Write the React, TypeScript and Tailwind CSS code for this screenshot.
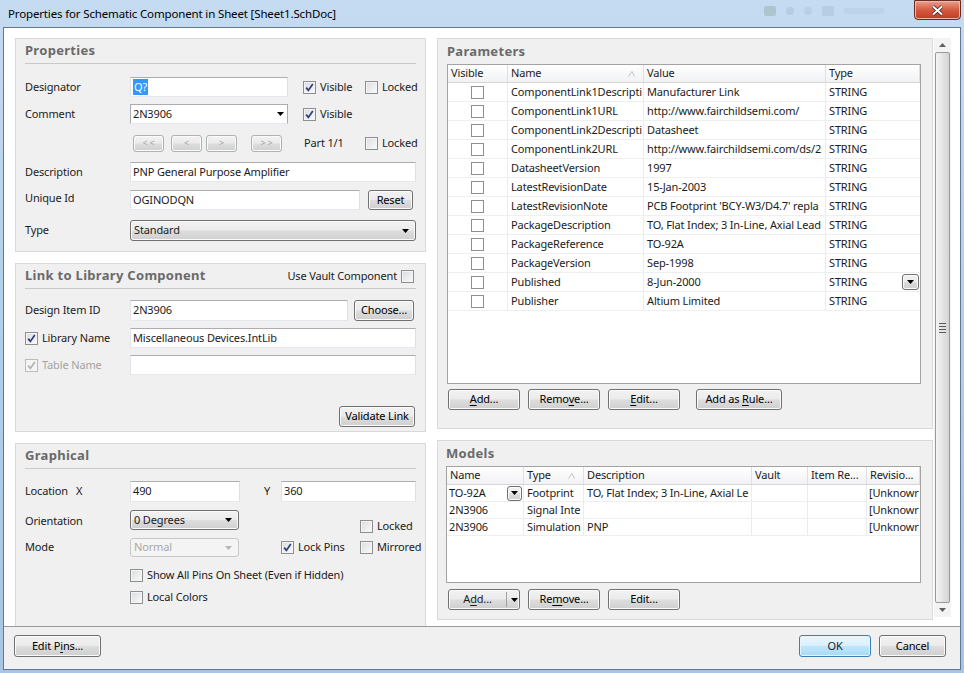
import React from "react";

const btnBg =
  "bg-[linear-gradient(#f2f2f2_0%,#ebebeb_48%,#dddddd_52%,#cfcfcf_100%)] border border-[#707070] rounded-[3px] shadow-[inset_0_0_0_1px_#fbfbfb]";

function Check({ checked, disabled }: { checked?: boolean; disabled?: boolean }) {
  return (
    <span
      className={`inline-flex w-[13px] h-[13px] shrink-0 items-center justify-center border ${
        disabled
          ? "border-[#bcbcbc] bg-[#f4f4f4]"
          : "border-[#8e8f8f] bg-[linear-gradient(135deg,#d9dbde,#fbfbfb)] shadow-[inset_0_0_0_1px_#f4f4f4]"
      }`}
    >
      {checked && (
        <svg width="9" height="9" viewBox="0 0 9 9">
          <path
            d="M1.2 4.6 L3.4 7.4 L7.8 1"
            fill="none"
            stroke={disabled ? "#b0b0b0" : "#2b3d78"}
            strokeWidth="1.7"
          />
        </svg>
      )}
    </span>
  );
}

function CheckLabel({
  label,
  checked,
  disabled,
  className = "",
}: {
  label: string;
  checked?: boolean;
  disabled?: boolean;
  className?: string;
}) {
  return (
    <span className={`flex items-center gap-[4px] shrink-0 whitespace-nowrap ${className}`}>
      <Check checked={checked} disabled={disabled} />
      <span className={disabled ? "text-[#a3a3a3]" : ""}>{label}</span>
    </span>
  );
}

function Btn({
  children,
  className = "",
  disabled,
}: {
  children: React.ReactNode;
  className?: string;
  disabled?: boolean;
}) {
  return (
    <button
      className={`flex items-center justify-center shrink-0 ${btnBg} ${
        disabled ? "text-[#a0a0a0] border-[#adb2b5]" : "text-black"
      } ${className}`}
    >
      <span className="whitespace-pre">{children}</span>
    </button>
  );
}

function Arrow({ color = "#000" }: { color?: string }) {
  return (
    <svg width="7" height="4" viewBox="0 0 7 4">
      <path d="M0 0 H7 L3.5 4 Z" fill={color} />
    </svg>
  );
}

function TextBox({ value, className = "" }: { value?: React.ReactNode; className?: string }) {
  return (
    <div
      className={`flex items-center shrink-0 bg-white border border-[#abadb3] border-l-[#e2e3ea] border-r-[#dbdfe6] border-b-[#e3e9ef] px-[2px] whitespace-nowrap overflow-hidden ${className}`}
    >
      {value}
    </div>
  );
}

function GraySelect({
  value,
  className = "",
  disabled,
}: {
  value: string;
  className?: string;
  disabled?: boolean;
}) {
  return (
    <div
      className={`flex items-center justify-between shrink-0 pl-[3px] pr-[6px] rounded-[3px] border ${
        disabled ? "border-[#c6c9cc] bg-[#f4f4f4] text-[#a8a8a8]" : `${btnBg}`
      } ${className}`}
    >
      <span>{value}</span>
      <Arrow color={disabled ? "#b5b5b5" : "#000"} />
    </div>
  );
}

function Panel({
  title,
  right,
  children,
  className = "",
}: {
  title: string;
  right?: React.ReactNode;
  children: React.ReactNode;
  className?: string;
}) {
  return (
    <div className={`bg-[#f0f0f0] border border-[#d9d9d9] px-[9px] ${className}`}>
      <div className="h-[25px] flex items-center justify-between border-b border-[#c9c9c9]">
        <span className="font-bold text-[13px] tracking-[0.3px] text-[#6a6a6a]">{title}</span>
        {right}
      </div>
      {children}
    </div>
  );
}

const params: [string, string][] = [
  ["ComponentLink1Descripti", "Manufacturer Link"],
  ["ComponentLink1URL", "http://www.fairchildsemi.com/"],
  ["ComponentLink2Descripti", "Datasheet"],
  ["ComponentLink2URL", "http://www.fairchildsemi.com/ds/2"],
  ["DatasheetVersion", "1997"],
  ["LatestRevisionDate", "15-Jan-2003"],
  ["LatestRevisionNote", "PCB Footprint 'BCY-W3/D4.7' repla"],
  ["PackageDescription", "TO, Flat Index; 3 In-Line, Axial Lead"],
  ["PackageReference", "TO-92A"],
  ["PackageVersion", "Sep-1998"],
  ["Published", "8-Jun-2000"],
  ["Publisher", "Altium Limited"],
];

const models = [
  ["TO-92A", "Footprint", "TO, Flat Index; 3 In-Line, Axial Le", "", "", "[Unknowr"],
  ["2N3906", "Signal Inte", "", "", "", "[Unknowr"],
  ["2N3906", "Simulation", "PNP", "", "", "[Unknowr"],
];

function SortMark() {
  return (
    <svg width="7" height="6" viewBox="0 0 7 6">
      <path d="M0.5 5.5 L4 0.5 L6.5 5.5" fill="none" stroke="#c2c2c2" strokeWidth="1" />
    </svg>
  );
}

function HeaderCell({ label, w, sort }: { label: string; w?: string; sort?: boolean }) {
  return (
    <div
      className={`flex items-center justify-between pl-[3px] pr-[8px] border-r border-[#dfe0e2] whitespace-nowrap overflow-hidden ${
        w ?? "flex-1"
      }`}
    >
      <span>{label}</span>
      {sort && <SortMark />}
    </div>
  );
}

function U({ children }: { children: React.ReactNode }) {
  return <span className="underline underline-offset-2">{children}</span>;
}

export default function App() {
  return (
    <div className="w-[964px] h-[673px] overflow-hidden bg-[linear-gradient(180deg,#c5dbf1_0%,#b7d0ea_40%,#a9c5e4_100%)] font-['Noto_Sans',sans-serif] text-[11px] tracking-[-0.15px] text-[#1b1b1b] flex flex-col">
      {/* title bar */}
      <div className="h-[27px] flex items-start justify-between shrink-0">
        <span className="pl-[8px] pt-[5px] text-[11.5px] text-black">
          Properties for Schematic Component in Sheet [Sheet1.SchDoc]
        </span>
        <div className="flex items-start">
          <div className="flex items-center gap-[10px] mt-[6px] mr-[30px] opacity-25">
            <span className="w-[12px] h-[10px] bg-[#6a8a6a] rounded-[2px]" />
            <span className="w-[8px] h-[8px] bg-[#8aa0c0] rounded-full" />
            <span className="w-[8px] h-[8px] bg-[#9ab0c8] rounded-full" />
            <span className="w-[12px] h-[10px] bg-[#8ea4bc] rounded-[2px]" />
            <span className="w-[40px] h-[6px] bg-[#a4bcd4] rounded-[2px]" />
          </div>
          <div className="w-[47px] h-[20px] mr-[3px] rounded-b-[4px] border border-[#6b2a20] bg-[linear-gradient(#e8a090_0%,#d45a40_50%,#c23a22_100%)] flex items-center justify-center shadow-[inset_0_0_0_1px_#f0b8a8]">
            <svg width="13" height="11" viewBox="0 0 13 11">
              <path d="M2 1.5 L11 9.5 M11 1.5 L2 9.5" stroke="#3a1a14" strokeWidth="3.4" />
              <path d="M2 1.5 L11 9.5 M11 1.5 L2 9.5" stroke="#fff" strokeWidth="2" />
            </svg>
          </div>
        </div>
      </div>

      {/* client */}
      <div className="ml-[3px] mr-[3px] h-[643px] border border-[#5e7896] bg-white flex flex-col shrink-0">
        <div className="h-[598px] flex pl-[11px] pt-[10px]">
          {/* left column */}
          <div className="w-[411px] flex flex-col">
            <Panel title="Properties" className="h-[214px]">
              <div className="mt-[13px] h-[20px] flex items-center">
                <span className="w-[105px] shrink-0">Designator</span>
                <TextBox
                  className="w-[158px] h-[20px]"
                  value={<span className="bg-[#3399ff] text-white px-[1px]">Q?</span>}
                />
                <CheckLabel label="Visible" checked className="ml-[15px] w-[62px]" />
                <CheckLabel label="Locked" />
              </div>
              <div className="mt-[7px] h-[20px] flex items-center">
                <span className="w-[105px] shrink-0">Comment</span>
                <div className="w-[158px] h-[20px] shrink-0 bg-white border border-[#abadb3] border-b-[#e3e9ef] flex items-center justify-between pl-[2px] pr-[3px]">
                  <span>2N3906</span>
                  <Arrow />
                </div>
                <CheckLabel label="Visible" checked className="ml-[15px]" />
              </div>
              <div className="mt-[10px] h-[18px] flex items-center">
                <div className="w-[108px] shrink-0" />
                <Btn disabled className="w-[31px] h-[17px] text-[9px]">&lt; &lt;</Btn>
                <Btn disabled className="w-[31px] h-[17px] ml-[7px] text-[9px]">&lt;</Btn>
                <Btn disabled className="w-[31px] h-[17px] ml-[4px] text-[9px]">&gt;</Btn>
                <Btn disabled className="w-[31px] h-[17px] ml-[14px] text-[9px]">&gt; &gt;</Btn>
                <span className="ml-[22px] w-[61px] shrink-0">Part 1/1</span>
                <CheckLabel label="Locked" />
              </div>
              <div className="mt-[10px] h-[20px] flex items-center">
                <span className="w-[105px] shrink-0">Description</span>
                <TextBox className="flex-1 h-[20px]" value="PNP General Purpose Amplifier" />
              </div>
              <div className="mt-[8px] h-[20px] flex items-center">
                <span className="w-[105px] shrink-0 self-start">Unique Id</span>
                <TextBox className="w-[230px] h-[20px]" value="OGINODQN" />
                <Btn className="ml-[8px] w-[45px] h-[20px]">Reset</Btn>
              </div>
              <div className="mt-[10px] h-[21px] flex items-center">
                <span className="w-[105px] shrink-0">Type</span>
                <GraySelect className="flex-1 shrink h-[21px]" value="Standard" />
              </div>
            </Panel>

            <Panel
              title="Link to Library Component"
              className="h-[169px] mt-[11px]"
              right={
                <span className="flex items-center gap-[4px] mr-[2px]">
                  Use Vault Component <Check />
                </span>
              }
            >
              <div className="mt-[11px] h-[21px] flex items-center">
                <span className="w-[105px] shrink-0">Design Item ID</span>
                <TextBox className="w-[218px] h-[21px] self-start" value="2N3906" />
                <Btn className="ml-[6px] w-[60px] h-[21px]">Choose...</Btn>
              </div>
              <div className="mt-[7px] h-[20px] flex items-center">
                <CheckLabel label="Library Name" checked className="w-[105px]" />
                <TextBox className="flex-1 shrink h-[20px]" value="Miscellaneous Devices.IntLib" />
              </div>
              <div className="mt-[7px] h-[20px] flex items-center">
                <CheckLabel label="Table Name" checked disabled className="w-[105px]" />
                <TextBox className="flex-1 shrink h-[20px]" />
              </div>
              <div className="mt-[31px] flex justify-end pr-[1px]">
                <Btn className="w-[76px] h-[21px]">Validate Link</Btn>
              </div>
            </Panel>

            <Panel title="Graphical" className="flex-1 mt-[11px] border-b-0">
              <div className="mt-[12px] h-[21px] flex items-center">
                <span className="w-[51px] shrink-0">Location</span>
                <span className="w-[54px] shrink-0">X</span>
                <TextBox className="w-[110px] h-[21px]" value="490" />
                <span className="ml-[24px] w-[17px] shrink-0">Y</span>
                <TextBox className="w-[135px] h-[21px]" value="360" />
              </div>
              <div className="mt-[8px] h-[23px] flex items-start">
                <span className="w-[105px] shrink-0 mt-[3px]">Orientation</span>
                <GraySelect className="w-[109px] h-[20px]" value="0 Degrees" />
                <CheckLabel label="Locked" className="ml-[121px] mt-[8px]" />
              </div>
              <div className="mt-[5px] h-[19px] flex items-center">
                <span className="w-[105px] shrink-0">Mode</span>
                <GraySelect disabled className="w-[109px] h-[19px]" value="Normal" />
                <CheckLabel label="Lock Pins" checked className="ml-[42px] w-[79px]" />
                <CheckLabel label="Mirrored" />
              </div>
              <div className="mt-[12px] h-[13px] flex items-center pl-[105px]">
                <CheckLabel label="Show All Pins On Sheet (Even if Hidden)" />
              </div>
              <div className="mt-[9px] h-[13px] flex items-center pl-[105px]">
                <CheckLabel label="Local Colors" />
              </div>
            </Panel>
          </div>

          {/* right column */}
          <div className="w-[496px] ml-[11px] flex flex-col">
            <div className="h-[391px] bg-[#f0f0f0] border border-[#d9d9d9] pl-[9px] pr-[11px] flex flex-col">
              <div className="h-[25px] flex items-center">
                <span className="font-bold text-[13px] tracking-[0.3px] text-[#6a6a6a]">Parameters</span>
              </div>
              <div className="h-[320px] bg-white border border-[#a3a3a3] flex flex-col">
                <div className="h-[18px] flex bg-[linear-gradient(#ffffff,#f1f2f4)] border-b border-[#d5d5d5] shrink-0">
                  <HeaderCell label="Visible" w="w-[60px]" />
                  <HeaderCell label="Name" w="w-[136px]" sort />
                  <HeaderCell label="Value" w="w-[182px]" />
                  <HeaderCell label="Type" />
                </div>
                {params.map(([name, value], i) => (
                  <div key={name} className="h-[19px] flex border-b border-[#efefef] shrink-0">
                    <div className="w-[60px] flex items-center justify-center border-r border-[#ececec]">
                      <span className="w-[13px] h-[13px] border border-[#8e8f8f] bg-white" />
                    </div>
                    <div className="w-[136px] pl-[3px] flex items-center whitespace-nowrap overflow-hidden border-r border-[#ececec]">
                      {name}
                    </div>
                    <div className="w-[182px] pl-[3px] flex items-center whitespace-nowrap overflow-hidden border-r border-[#ececec]">
                      {value}
                    </div>
                    <div className="flex-1 pl-[3px] pr-[1px] flex items-center justify-between">
                      <span>STRING</span>
                      {i === 10 && (
                        <span className={`w-[17px] h-[16px] flex items-center justify-center ${btnBg} rounded-[2px]`}>
                          <Arrow />
                        </span>
                      )}
                    </div>
                  </div>
                ))}
              </div>
              <div className="mt-[5px] flex">
                <Btn className="w-[72px] h-[21px] ml-[1px]">
                  <U>A</U>dd...
                </Btn>
                <Btn className="w-[72px] h-[21px] ml-[8px]">
                  Remo<U>v</U>e...
                </Btn>
                <Btn className="w-[72px] h-[21px] ml-[8px]">
                  <U>E</U>dit...
                </Btn>
                <Btn className="w-[86px] h-[21px] ml-[16px]">
                  {"Add as "}
                  <U>R</U>ule...
                </Btn>
              </div>
            </div>

            <div className="h-[180px] mt-[11px] bg-[#f0f0f0] border border-[#d9d9d9] pl-[8px] pr-[11px] flex flex-col">
              <div className="h-[25px] flex items-center">
                <span className="font-bold text-[13px] tracking-[0.3px] text-[#6a6a6a]">Models</span>
              </div>
              <div className="h-[117px] bg-white border border-[#a3a3a3] flex flex-col">
                <div className="h-[18px] flex bg-[linear-gradient(#ffffff,#f1f2f4)] border-b border-[#d5d5d5] shrink-0">
                  <HeaderCell label="Name" w="w-[77px]" />
                  <HeaderCell label="Type" w="w-[60px]" sort />
                  <HeaderCell label="Description" w="w-[168px]" />
                  <HeaderCell label="Vault" w="w-[56px]" />
                  <HeaderCell label="Item Re..." w="w-[59px]" />
                  <HeaderCell label="Revisio..." />
                </div>
                {models.map((m, i) => (
                  <div key={i} className="h-[17px] flex border-b border-[#efefef] shrink-0">
                    <div className="w-[77px] pl-[2px] pr-[1px] flex items-center justify-between border-r border-[#ececec]">
                      <span>{m[0]}</span>
                      {i === 0 && (
                        <span className={`w-[15px] h-[15px] flex items-center justify-center ${btnBg} rounded-[2px]`}>
                          <Arrow />
                        </span>
                      )}
                    </div>
                    <div className="w-[60px] pl-[3px] flex items-center whitespace-nowrap overflow-hidden border-r border-[#ececec]">
                      {m[1]}
                    </div>
                    <div className="w-[168px] pl-[3px] flex items-center whitespace-nowrap overflow-hidden border-r border-[#ececec]">
                      {m[2]}
                    </div>
                    <div className="w-[56px] border-r border-[#ececec]" />
                    <div className="w-[59px] border-r border-[#ececec]" />
                    <div className="flex-1 pl-[2px] flex items-center whitespace-nowrap overflow-hidden">
                      {m[5]}
                    </div>
                  </div>
                ))}
              </div>
              <div className="mt-[6px] flex">
                <button className={`w-[72px] h-[21px] ml-[2px] flex items-center ${btnBg}`}>
                  <span className="w-[57px] text-center">
                    A<U>d</U>d...
                  </span>
                  <span className="h-[15px] border-l border-[#a0a0a0] pl-[4px] flex items-center">
                    <Arrow />
                  </span>
                </button>
                <Btn className="w-[72px] h-[21px] ml-[8px]">
                  Re<U>m</U>ove...
                </Btn>
                <Btn className="w-[72px] h-[21px] ml-[8px]">Edit...</Btn>
              </div>
            </div>
          </div>

          {/* scrollbar */}
          <div className="w-[17px] h-[579px] ml-[1px] bg-[#f3f3f3] flex flex-col">
            <div className="h-[14px] flex items-center justify-center">
              <svg width="7" height="4" viewBox="0 0 7 4">
                <path d="M0 4 H7 L3.5 0 Z" fill="#606060" />
              </svg>
            </div>
            <div className="flex-1 mx-[1px] rounded-[2px] border border-[#9a9a9a] bg-[linear-gradient(90deg,#f4f4f4,#e4e4e4_50%,#d4d4d4)] flex items-center justify-center">
              <div className="flex flex-col gap-[2px]">
                <span className="w-[7px] h-[1px] bg-[#5a5a5a]" />
                <span className="w-[7px] h-[1px] bg-[#5a5a5a]" />
                <span className="w-[7px] h-[1px] bg-[#5a5a5a]" />
                <span className="w-[7px] h-[1px] bg-[#5a5a5a]" />
              </div>
            </div>
            <div className="h-[14px] flex items-center justify-center">
              <Arrow color="#606060" />
            </div>
          </div>
        </div>

        {/* bottom bar */}
        <div className="flex-1 bg-[#f0f0f0] border-t border-[#9a9a9a] flex items-start pt-[8px] pl-[10px] pr-[14px]">
          <Btn className="w-[87px] h-[22px]">
            Edit P<U>i</U>ns...
          </Btn>
          <div className="flex-1" />
          <button className="w-[72px] h-[22px] flex items-center justify-center rounded-[3px] border border-[#3c7fb1] bg-[linear-gradient(#eaf6fd_0%,#d9f0fc_48%,#bee6fd_52%,#a7d9f5_100%)] shadow-[inset_0_0_0_1px_#e6f4fc]">
            OK
          </button>
          <Btn className="w-[67px] h-[22px] ml-[8px]">Cancel</Btn>
        </div>
      </div>
    </div>
  );
}
